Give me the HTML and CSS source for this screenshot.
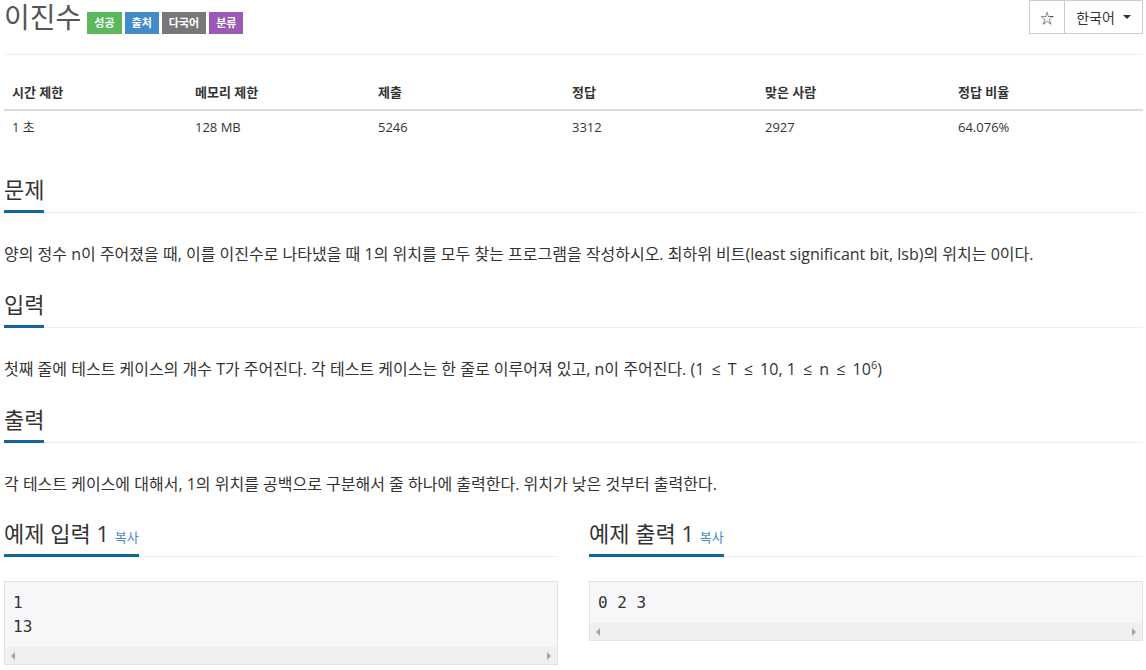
FILE: index.html
```html
<!DOCTYPE html>
<html lang="ko">
<head>
<meta charset="utf-8">
<title>이진수</title>
<link rel="stylesheet" href="styles.css">
</head>
<body>
<div class="page">
  <div class="page-header">
    <h1 class="title">
      <span class="title-text">이진수</span>
      <span class="label label-success">성공</span>
      <span class="label label-primary">출처</span>
      <span class="label label-default">다국어</span>
      <span class="label label-purple">분류</span>
    </h1>
    <div class="btn-group">
      <button class="btn btn-star">☆</button>
      <button class="btn btn-lang">한국어 <span class="caret"></span></button>
    </div>
  </div>

  <table class="info">
    <thead>
      <tr>
        <th class="c1">시간 제한</th>
        <th class="c2">메모리 제한</th>
        <th class="c3">제출</th>
        <th class="c4">정답</th>
        <th class="c5">맞은 사람</th>
        <th class="c6">정답 비율</th>
      </tr>
    </thead>
    <tbody>
      <tr>
        <td>1 초</td>
        <td>128 MB</td>
        <td>5246</td>
        <td>3312</td>
        <td>2927</td>
        <td>64.076%</td>
      </tr>
    </tbody>
  </table>

  <section class="section">
    <div class="headline"><h2>문제</h2></div>
    <p class="text">양의 정수 n이 주어졌을 때, 이를 이진수로 나타냈을 때 1의 위치를 모두 찾는 프로그램을 작성하시오. 최하위 비트(least significant bit, lsb)의 위치는 0이다.</p>
  </section>

  <section class="section">
    <div class="headline"><h2>입력</h2></div>
    <p class="text">첫째 줄에 테스트 케이스의 개수 T가 주어진다. 각 테스트 케이스는 한 줄로 이루어져 있고, n이 주어진다. (1 <span class="op">≤</span> T <span class="op">≤</span> 10, 1 <span class="op">≤</span> n <span class="op">≤</span> 10<sup>6</sup>)</p>
  </section>

  <section class="section">
    <div class="headline"><h2>출력</h2></div>
    <p class="text">각 테스트 케이스에 대해서, 1의 위치를 공백으로 구분해서 줄 하나에 출력한다. 위치가 낮은 것부터 출력한다.</p>
  </section>

  <div class="samples">
    <div class="sample">
      <div class="headline"><h2>예제 입력 1 <a class="copy">복사</a></h2></div>
      <div class="sample-box">
        <pre class="sample-data">1
13</pre>
        <div class="hscroll"><span class="arrow arrow-left"></span><span class="arrow arrow-right"></span></div>
      </div>
    </div>
    <div class="sample">
      <div class="headline"><h2>예제 출력 1 <a class="copy">복사</a></h2></div>
      <div class="sample-box">
        <pre class="sample-data">0 2 3</pre>
        <div class="hscroll"><span class="arrow arrow-left"></span><span class="arrow arrow-right"></span></div>
      </div>
    </div>
  </div>
</div>
</body>
</html>
```

FILE: styles.css
```css
* { box-sizing: border-box; }

html, body {
  margin: 0;
  padding: 0;
  background: #fff;
}

body {
  font-family: "Open Sans", "Noto Sans CJK KR", sans-serif;
  font-size: 14px;
  color: #333;
  overflow: hidden;
}

.page {
  padding: 0 3px 0 4px;
}

.page-header {
  display: flex;
  justify-content: space-between;
  align-items: flex-start;
  height: 55px;
  border-bottom: 1px solid #eee;
}

.title {
  margin: 0;
  display: flex;
  align-items: center;
  font-weight: 400;
  height: 36px;
}

.title-text {
  font-size: 28px;
  color: #555;
  margin-right: 6px;
  line-height: 36px;
  position: relative;
  top: -1px;
}

.label {
  display: inline-block;
  font-size: 11px;
  font-weight: 700;
  color: #fff;
  height: 22px;
  line-height: 22px;
  padding: 0 7px;
  margin-right: 3px;
  margin-top: 10px;
}

.label-success { background: #5cb85c; }
.label-primary { background: #428bca; }
.label-default { background: #777; }
.label-purple { background: #9b59b6; }

.btn-group {
  display: flex;
}

.btn {
  font-family: "Open Sans", "Noto Sans CJK KR", sans-serif;
  font-size: 14px;
  color: #333;
  background: #fff;
  border: 1px solid #ccc;
  height: 34px;
  padding: 0;
}

.btn-star {
  width: 36px;
  font-size: 14px;
}

.btn-lang {
  width: 79px;
  margin-left: -1px;
  display: flex;
  align-items: center;
  justify-content: center;
  gap: 8px;
}

.caret {
  width: 0;
  height: 0;
  border-left: 4px solid transparent;
  border-right: 4px solid transparent;
  border-top: 4px solid #333;
}

.info {
  width: 100%;
  border-collapse: collapse;
  margin-top: 27px;
  margin-bottom: 27px;
  font-size: 13px;
}

.info th {
  text-align: left;
  font-weight: 700;
  padding: 0 8px 8px;
  height: 26px;
  border-bottom: 2px solid #ddd;
  vertical-align: bottom;
}

.info td {
  padding: 6px 8px 10px;
  height: 36px;
}

.c1 { width: 183px; }
.c2 { width: 183px; }
.c3 { width: 194px; }
.c4 { width: 193px; }
.c5 { width: 193px; }
.c6 { width: 193px; }

.section {
  margin-top: 22px;
}

.headline {
  border-bottom: 1px solid #eee;
  height: 40px;
}

.headline h2 {
  display: inline-block;
  margin: 0;
  font-size: 22px;
  font-weight: 400;
  color: #333;
  line-height: 28px;
  height: 40px;
  padding-top: 2px;
  border-bottom: 3px solid #0e6a9b;
}

.text {
  margin: 29px 0 0;
  font-size: 16px;
  line-height: 24px;
  color: #333;
}

.text .op {
  margin: 0 3px;
}

.text sup {
  font-size: 11px;
  line-height: 0;
}

.samples {
  display: grid;
  grid-template-columns: 1fr 1fr;
  column-gap: 31px;
  margin-top: 21px;
}

.copy {
  font-size: 13px;
  color: #428bca;
  margin-left: 0;
}

.sample-box {
  margin-top: 24px;
  border: 1px solid #e1e1e8;
  background: #f7f7f9;
}

.sample-data {
  margin: 0;
  padding: 9px 8px 8px;
  font-family: "DejaVu Sans Mono", "Liberation Mono", monospace;
  font-size: 16px;
  line-height: 24px;
  color: #333;
}

.hscroll {
  height: 17px;
  background: #f0f0f0;
  display: flex;
  justify-content: space-between;
  align-items: center;
  padding: 0 6px;
}

.arrow {
  width: 0;
  height: 0;
  border-top: 4px solid transparent;
  border-bottom: 4px solid transparent;
}

.arrow-left { border-right: 4px solid #a3a3a3; }
.arrow-right { border-left: 4px solid #a3a3a3; }
```
